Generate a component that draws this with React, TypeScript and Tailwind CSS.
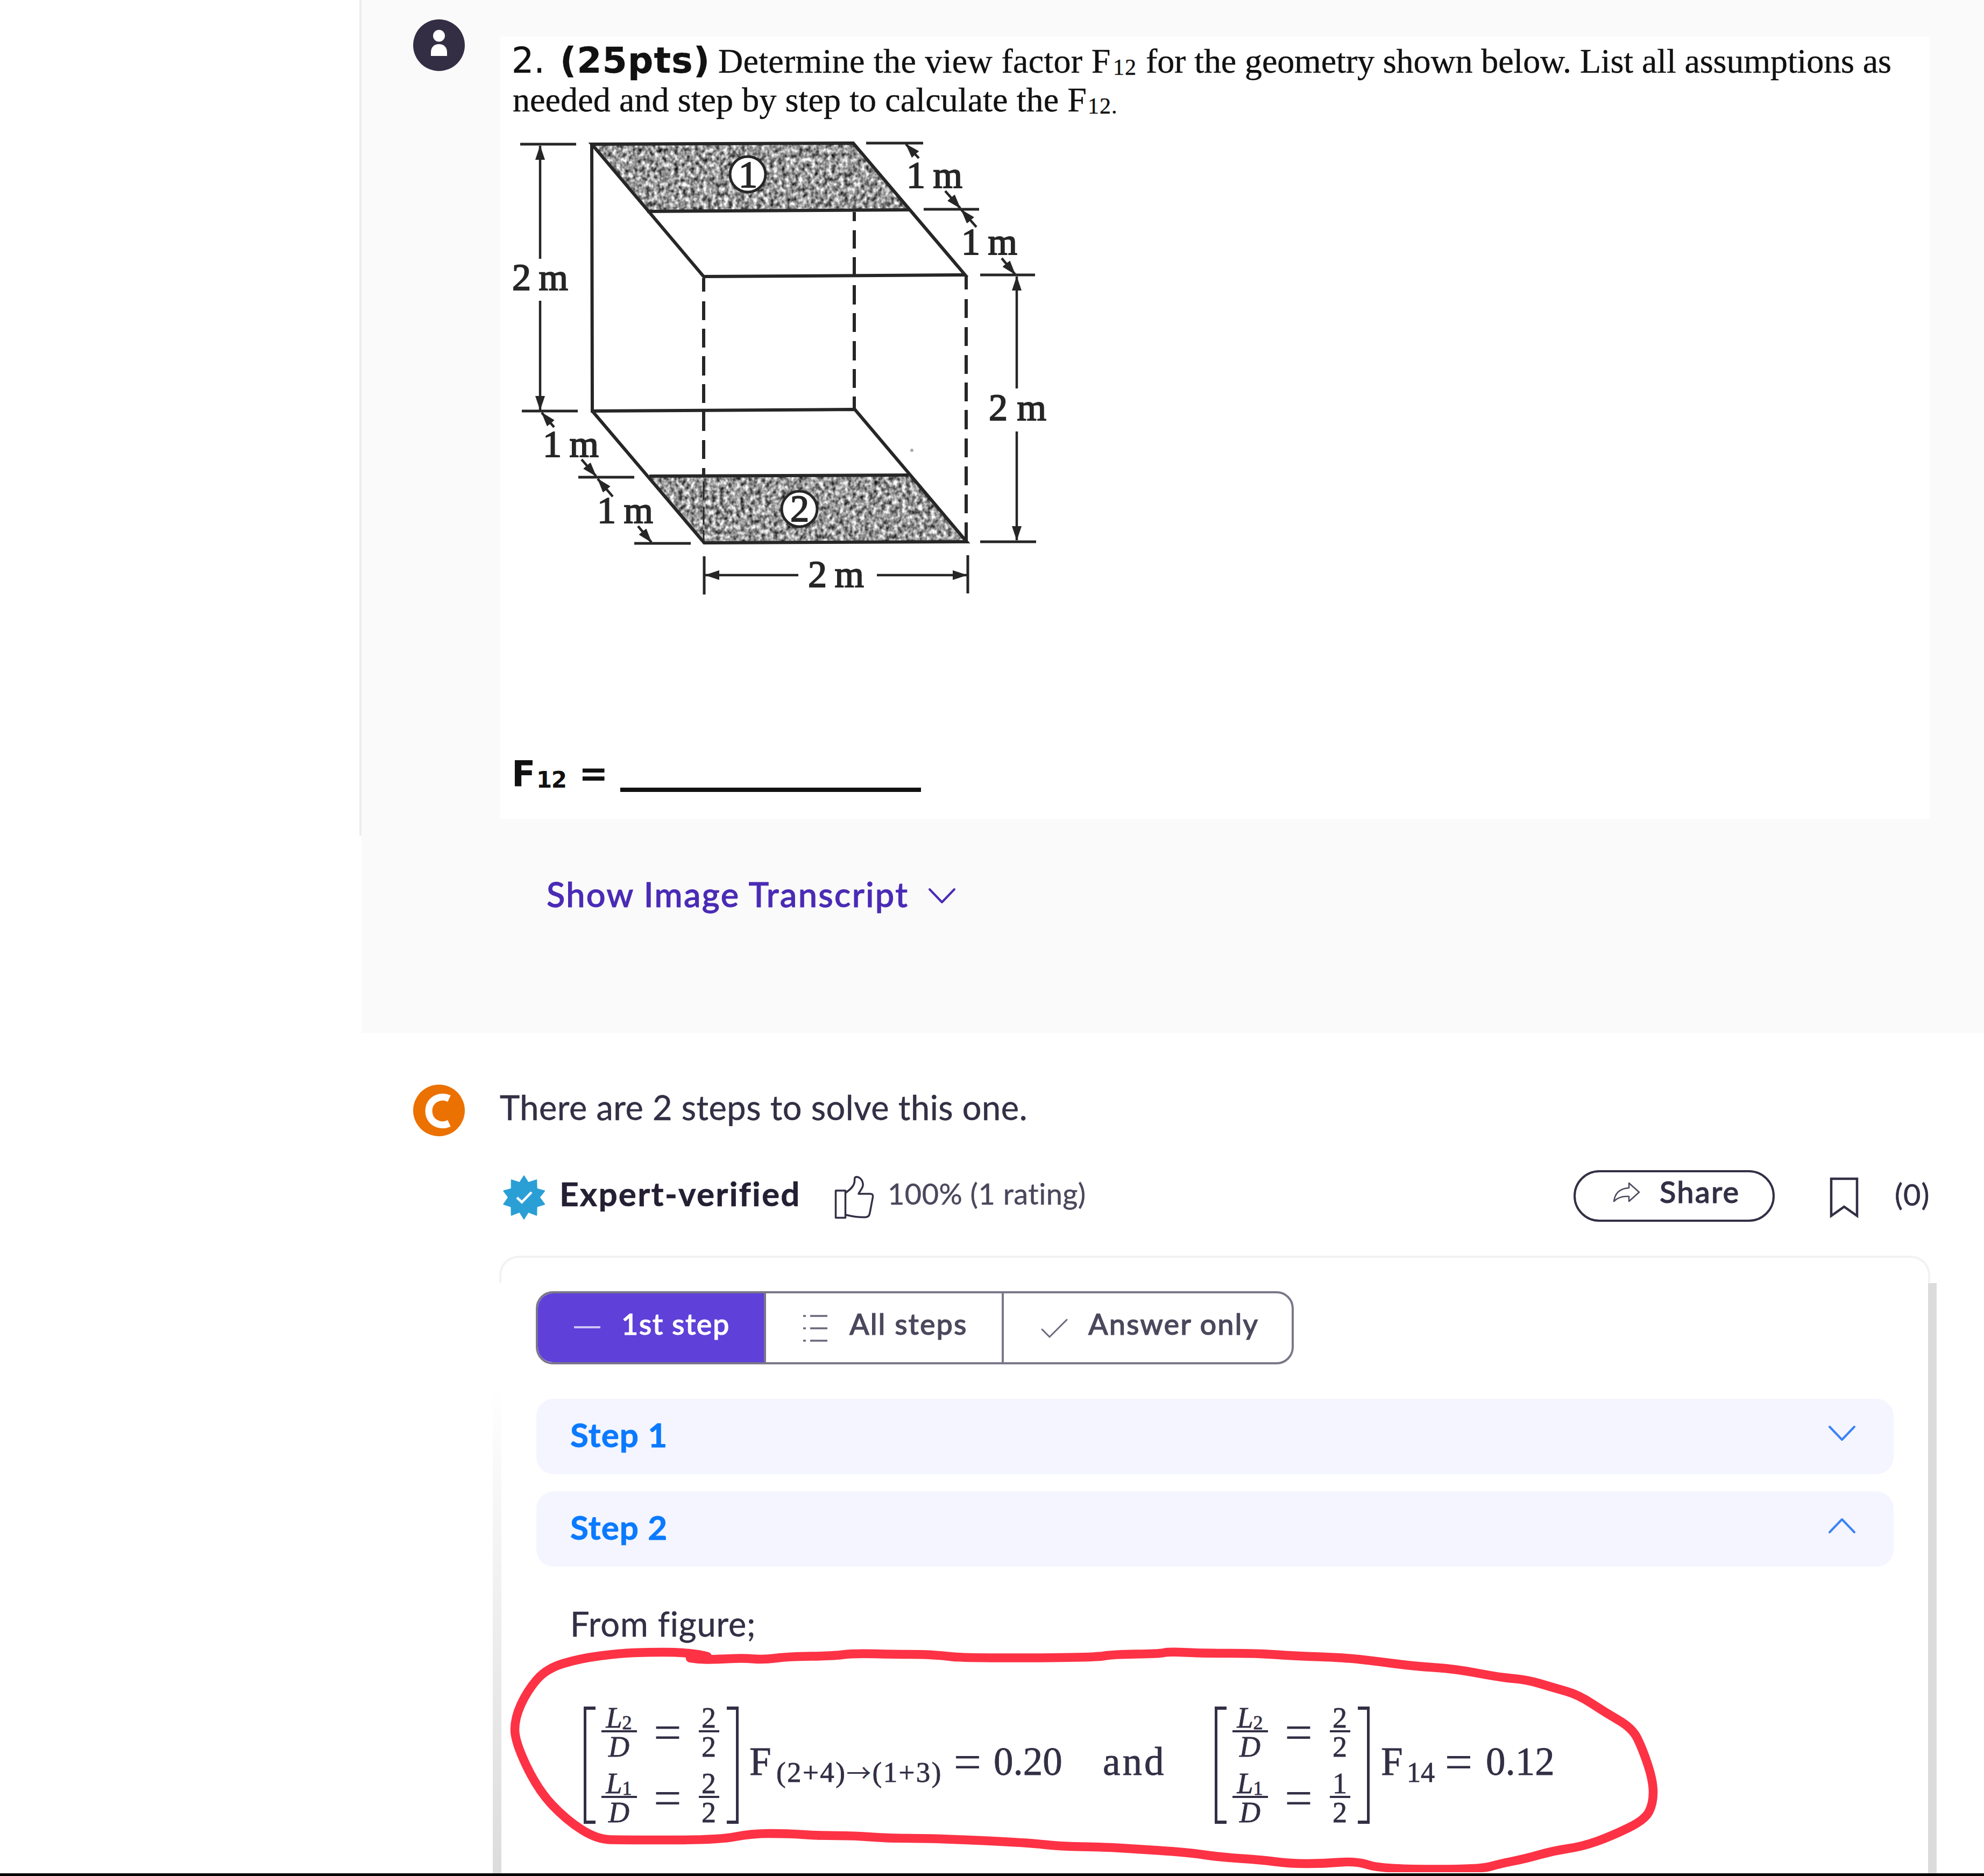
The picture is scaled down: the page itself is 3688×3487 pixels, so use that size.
import type { ReactNode } from "react"

const serif = "font-['Liberation_Serif',serif]"
const verdana = "font-['DejaVu_Sans',sans-serif]"

function Avatar() {
  return (
    <svg viewBox="0 0 96 96" className="w-24 h-24 shrink-0">
      <circle cx="48" cy="48" r="48" fill="#332e44" />
      <circle cx="48" cy="30.500" r="11" fill="#fff" />
      <path d="M33 68v-7c0-9 6-15 15-15s15 6 15 15v7z" fill="#fff" />
    </svg>
  )
}

function BrandMark() {
  return (
    <svg viewBox="0 0 96 96" className="w-24 h-24 shrink-0">
      <circle cx="48" cy="48" r="48" fill="#eb7100" />
      <path d="M67 26C50 18 29 28 29 49C29 70 50 80 67 72" fill="none" stroke="#fff" strokeWidth="13" />
    </svg>
  )
}

function VerifiedBadge() {
  return (
    <svg viewBox="0 0 110 110" className="w-[110px] h-[110px] shrink-0">
      <path
        d="M54 14.500L62 27L77.500 22L78 38.500L92.500 42.500L83 54.500L92.500 67.500L78 72L77.500 88L62 82L54 95L46 82L30.500 88L30 72L16 67.500L25 54.500L16 42.500L30.500 38.500L30.500 22L46 27Z"
        fill="#2a9fd6"
        stroke="#2a9fd6"
        strokeWidth="1.500"
        strokeLinejoin="round"
      />
      <path d="M41 55l9 8.500L68 45" fill="none" stroke="#fff" strokeWidth="4.500" />
    </svg>
  )
}

function ThumbIcon() {
  return (
    <svg viewBox="0 0 110 110" className="w-[110px] h-[110px] shrink-0" fill="none" stroke="#332f45" strokeWidth="3.500" strokeLinejoin="round">
      <path d="M13.500 42H31.500V92.500H13.500Z" />
      <path d="M32 46C42 39 48 33 48.500 25C48.500 19 48.500 16.500 52.500 16.500C59 17 65 24 64 33C63 39 59 41 56 48H77C82 48 83 50 82.500 54L77 83C76 89 74 91 69 91.500C56 92 44 90 32 87" />
    </svg>
  )
}

function Chevron({ up = false, color }: { up?: boolean; color: string }) {
  return (
    <svg viewBox="0 0 52 30" className="w-[52px] h-[30px] shrink-0" fill="none" stroke={color} strokeWidth="4" strokeLinecap="round" strokeLinejoin="round">
      <path d={up ? "M3 27L26 3L49 27" : "M3 3L26 27L49 3"} />
    </svg>
  )
}

function Arrow({ x1, y1, x2, y2 }: { x1: number; y1: number; x2: number; y2: number }) {
  return <line x1={x1} y1={y1} x2={x2} y2={y2} strokeWidth="4.500" markerEnd="url(#head)" />
}

function BoxFigure() {
  return (
    <svg viewBox="29 0 1071 900" className="w-[1071px] h-[900px] block" fill="none" stroke="#262626" strokeWidth="6">
      <defs>
        <marker id="head" markerUnits="userSpaceOnUse" markerWidth="28" markerHeight="20" refX="26" refY="9" orient="auto">
          <path d="M0 0L27 9L0 18Z" fill="#262626" stroke="none" />
        </marker>
        <filter id="grain" x="0" y="0" width="1" height="1" colorInterpolationFilters="sRGB">
          <feTurbulence type="fractalNoise" baseFrequency="0.13 0.11" numOctaves="2" seed="4" />
          <feColorMatrix values="1.500 0 0 0 -0.150  1.500 0 0 0 -0.150  1.500 0 0 0 -0.150  0 0 0 0 1" />
          <feComposite in2="SourceGraphic" operator="in" />
        </filter>
      </defs>

      <polygon points="200,38 686,36 791,160 303,163" fill="#999" stroke="none" filter="url(#grain)" />
      <polygon points="307,655 789,653 897,777 409,779" fill="#999" stroke="none" filter="url(#grain)" />

      {/* solid edges */}
      <path d="M200 38L686 36L894 281L408 284Z" />
      <path d="M303 163L791 160" />
      <path d="M200 38L201 534L689 531L897 777L409 779L201 534" />
      <path d="M307 655L789 653" />

      {/* hidden edges */}
      <path d="M688 164V181M688 198V232M688 248V284M688 300V336M688 352V387M688 404V440M688 456V491M688 507V531" />
      <path d="M408 287V312M408 330V365M408 381V416M408 432V468M408 484V519M408 535V571M408 588V623M408 640V655" />
      <path d="M408 665V700M408 712V745M408 755V779" strokeWidth="3" />
      <path d="M896 284V308M896 326V361M896 378V413M896 430V465M896 481V516M896 532V568M896 585V620M896 637V672M896 689V724M896 741V777" />

      {/* dimension ticks */}
      <g strokeWidth="5">
        <path d="M67 38H171M70 534H174M175 657H279M279 780H384" />
        <path d="M710 36H816M817 159H920M922 281H1024M922 777H1026" />
        <path d="M409 804V875M899 802V873" />
      </g>
      <Arrow x1={104} y1={251} x2={104} y2={41} />
      <Arrow x1={104} y1={329} x2={104} y2={532} />
      <Arrow x1={990} y1={492} x2={990} y2={284} />
      <Arrow x1={990} y1={572} x2={990} y2={774} />
      <Arrow x1={584} y1={839} x2={411} y2={839} />
      <Arrow x1={730} y1={839} x2={897} y2={839} />
      <Arrow x1={808} y1={64} x2={784} y2={38} />
      <Arrow x1={857} y1={125} x2={885} y2={157} />
      <Arrow x1={915} y1={192} x2={887} y2={160} />
      <Arrow x1={962} y1={250} x2={987} y2={280} />
      <Arrow x1={130} y1={564} x2={107} y2={537} />
      <Arrow x1={181} y1={624} x2={208} y2={655} />
      <Arrow x1={239} y1={693} x2={211} y2={660} />
      <Arrow x1={286} y1={748} x2={311} y2={778} />
      <circle cx="795" cy="607" r="3" fill="#aaa" stroke="none" />

      <circle cx="490" cy="94" r="33" fill="#fff" strokeWidth="5" />
      <circle cx="586" cy="716" r="33" fill="#fff" strokeWidth="5" />
      <g className={serif} fill="#262626" stroke="#262626" strokeWidth="2" fontSize="70">
        <text x="473" y="118">1</text>
        <text x="569" y="739">2</text>
        <text x="52" y="309" textLength="104">2 m</text>
        <text x="785" y="119" textLength="104">1 m</text>
        <text x="887" y="243" textLength="104">1 m</text>
        <text x="109" y="619" textLength="104">1 m</text>
        <text x="210" y="742" textLength="104">1 m</text>
        <text x="938" y="551" textLength="107">2 m</text>
        <text x="602" y="861" textLength="104">2 m</text>
      </g>
    </svg>
  )
}

function Question() {
  return (
    <section className="flex h-[1920px] pl-[668px]">
      <div className="w-1 h-[1553px] bg-[#ededed]" />
      <div className="flex flex-1 gap-[65px] bg-[#fafafa] pl-24 pt-9">
        <Avatar />
        <div className="flex flex-col">
          <div className="mt-8 w-[2659px] h-[1454px] bg-white text-[#111]">
            <div className={`h-[162px] pl-6 pt-2 text-[64px] leading-[74px] whitespace-pre [-webkit-text-stroke:0.4px] ${serif}`}>
              <div className="flex items-baseline h-[73px]">
                <span className={`w-[90px] -ml-0.5 text-[65px] ${verdana}`}>2.</span>
                <span className={`w-[294px] text-[66px] font-bold tracking-[1.3px] ${verdana}`}>(25pts)</span>
                <span className="w-[734px] tracking-[0.3px]">Determine the view factor F</span>
                <span className="relative top-1 w-[61px] text-[42px] leading-none tracking-[1px]">12</span>
                <span className="tracking-[-0.1px]">for the geometry shown below. List all assumptions as</span>
              </div>
              <div className="flex items-baseline">
                <span className="w-[1069px] tracking-[0.1px]">needed and step by step to calculate the F</span>
                <span className="relative top-1 text-[42px] leading-none tracking-[1px]">12.</span>
              </div>
            </div>
            <BoxFigure />
            <div className={`flex items-baseline mt-[272px] pl-[22px] text-[65px] font-bold leading-[74px] ${verdana}`}>
              <span className="w-[46px]">F</span>
              <span className="relative top-[3px] w-[79px] text-[42px] tracking-[-1.5px]">12</span>
              <span className="w-[77px]">=</span>
              <span className="h-2 w-[559px] translate-y-[11px] bg-[#111]" />
            </div>
          </div>
          <button className="flex items-center mt-[100px] pl-[87px] text-[63px] font-medium leading-[80px] text-[#4a2bb5]">
            <span className="w-[709px] text-left whitespace-nowrap tracking-[2.4px] [-webkit-text-stroke:1.1px]">Show Image Transcript</span>
            <span className="pt-1.5">
              <Chevron color="#4a2bb5" />
            </span>
          </button>
        </div>
      </div>
    </section>
  )
}

function StatusRow() {
  return (
    <div className="flex items-start mt-[77px] h-24 w-[2659px] whitespace-nowrap">
      <div className="-mt-1 -ml-[9px] w-[120px]">
        <VerifiedBadge />
      </div>
      <span className="w-[500px] text-[62px] font-bold leading-[86px] tracking-[2.2px] text-[#241f33] [-webkit-text-stroke:0.6px]">Expert-verified</span>
      <div className="-mt-1 w-[110px]">
        <ThumbIcon />
      </div>
      <span className="text-[54px] leading-[88px] tracking-[0.5px] text-[#4b475c] [-webkit-text-stroke:0.4px]">100% (1 rating)</span>
      <button className="flex items-start ml-auto w-[374px] h-24 rounded-full border-4 border-[#332f45] pl-[68px] text-[56px] font-medium leading-[72px] tracking-[2.2px] text-[#332f45] [-webkit-text-stroke:1.1px]">
        <svg viewBox="0 0 54 42" className="w-[54px] h-[42px] mt-[17px] mr-[34px]" fill="none" stroke="#4b475c" strokeWidth="2.500" strokeLinejoin="round">
          <path d="M3 37C5 21 15 13 31 12V3L50 20L31 37V28C18 27 10 30 3 37Z" />
        </svg>
        Share
      </button>
      <svg viewBox="0 0 56 78" className="w-14 h-[78px] mt-3 ml-[101px]" fill="none" stroke="#332f45" strokeWidth="4.500">
        <path d="M4 4H52V73L28 56L4 73Z" />
      </svg>
      <span className="ml-[66px] w-[66px] text-[56px] leading-[89px] tracking-[1px] text-[#332f45] [-webkit-text-stroke:0.6px]">(0)</span>
    </div>
  )
}

function Tabs() {
  return (
    <div className="flex w-[1409px] h-[136px] -ml-px overflow-hidden rounded-[32px] border-4 border-[#7b778a] text-[54px] font-medium leading-[113px] tracking-[2px] text-[#4b475c] whitespace-nowrap [-webkit-text-stroke:1.1px]">
      <button className="flex w-[424px] border-r-4 border-[#7b778a] bg-[#5f40d9] pl-[67px] text-white tracking-[1.5px]">
        <span className="mt-[61px] mr-[39px] h-1 w-[49px] bg-[#cdc3f4]" />
        1st step
      </button>
      <button className="flex w-[442px] border-r-4 border-[#7b778a] pl-[67px]">
        <svg viewBox="0 0 50 54" className="w-[50px] h-[54px] mt-[38px] mr-[38px]" stroke="#6b677b" strokeWidth="3.500">
          <path d="M2 4H7M15 4H47M2 27H7M15 27H47M2 50H7M15 50H47" />
        </svg>
        All steps
      </button>
      <button className="flex pl-[68px]">
        <svg viewBox="0 0 52 40" className="w-[52px] h-10 mt-[45px] mr-[37px]" fill="none" stroke="#6b677b" strokeWidth="3" strokeLinecap="round">
          <path d="M3 22L17 36L49 4" />
        </svg>
        Answer only
      </button>
    </div>
  )
}

function StepBar({ title, open = false }: { title: string; open?: boolean }) {
  return (
    <button className="flex justify-between w-[2523px] h-[140px] rounded-[32px] bg-[#f4f5ff] pl-[63px] pr-[70px] text-[62px] font-bold leading-[132px] tracking-[1.1px] text-[#0a7aff] [-webkit-text-stroke:0.8px]">
      {title}
      <span className="mt-[49px]">
        <Chevron up={open} color="#3b82f6" />
      </span>
    </button>
  )
}

function Fraction({ top, sub, bottom, wide = false }: { top: string; sub?: string; bottom: string; wide?: boolean }) {
  return (
    <div className={`flex flex-col items-center text-[54px] ${wide ? "w-[66px] italic" : "w-[38px]"}`}>
      <div className="h-[59px] leading-[73px] whitespace-nowrap">
        {top}
        {sub && <span className="relative top-[3px] text-[36px] not-italic leading-none">{sub}</span>}
      </div>
      <div className="h-1 w-full bg-[#332f45]" />
      <div className="h-[59px] leading-[55px]">{bottom}</div>
    </div>
  )
}

function Equals({ children = "=" }: { children?: ReactNode }) {
  return <span className="flex w-[49px] justify-center text-[92px] [-webkit-text-stroke:0px]">{children}</span>
}

function Matrix({ rows }: { rows: string[][] }) {
  return (
    <div className="flex h-[218px] w-[288px] justify-between">
      <div className="w-[22px] border-y-[6px] border-l-[5px] border-[#332f45]" />
      <div className="-mt-[15px] w-[219px]">
        {rows.map(([sub, num, den]) => (
          <div key={sub} className="flex items-center justify-between h-[122px]">
            <Fraction top="L" sub={sub} bottom="D" wide />
            <div className="pt-1 leading-[92px]">
              <Equals />
            </div>
            <Fraction top={num} bottom={den} />
          </div>
        ))}
      </div>
      <div className="w-[22px] ml-1 border-y-[6px] border-r-[5px] border-[#332f45]" />
    </div>
  )
}

function Equation() {
  return (
    <div className={`flex items-start mt-[115px] ml-[88px] h-[218px] text-[73px] leading-[205px] text-[#332f45] whitespace-nowrap [-webkit-text-stroke:0.8px] ${serif}`}>
      <Matrix rows={[["2", "2", "2"], ["1", "2", "2"]]} />
      <span className="ml-5 w-[50px]">F</span>
      <span className="w-[331px] text-[53px] leading-[245px] tracking-[2.4px]">
        (2+4)<span className="font-['Noto_Sans_CJK_JP','DejaVu_Sans',sans-serif] text-[46px] leading-none [-webkit-text-stroke:0px]">→</span>(1+3)
      </span>
      <div className="leading-[206px]">
        <Equals />
      </div>
      <span className="ml-[24px] w-[203px]">0.20</span>
      <span className="w-[208px] tracking-[4px]">and</span>
      <Matrix rows={[["2", "2", "2"], ["1", "1", "2"]]} />
      <span className="ml-[21px] w-[48px]">F</span>
      <span className="w-[72px] text-[52px] leading-[245px]">14</span>
      <div className="leading-[206px]">
        <Equals />
      </div>
      <span className="ml-[26px]">0.12</span>
    </div>
  )
}

const markerPoints =
  "1283,3082 1300,3085 1336,3084 1382,3082 1420,3085 1466,3079 1550,3078 1585,3073 1665,3075 1711,3075 1750,3077 1792,3082 2033,3081 2070,3075 2154,3074 2173,3070 2238,3073 2337,3073 2406,3078 2498,3081 2560,3088 2628,3097 2705,3102 2789,3118 2838,3122 2888,3137 2934,3150 2984,3183 3034,3212 3053,3250 3073,3310 3073,3353 3057,3383 2995,3413 2942,3432 2888,3440 2835,3455 2789,3464 2750,3475 2567,3474 2521,3459 2460,3464 2398,3464 2345,3457 2268,3452 2207,3443 2100,3436 2048,3433 1971,3432 1910,3425 1734,3417 1650,3417 1589,3412 1520,3412 1466,3408 1397,3408 1336,3420 1160,3420 1110,3419 1053,3383 1000,3327 957,3237 957,3193 980,3143 1015,3102 1076,3083 1152,3073 1206,3071 1260,3071 1300,3075 1330,3083"

// Smooths the hand-drawn loop by running quadratic curves through the midpoints.
function smooth(points: string) {
  const pts = points.split(" ").map((p) => p.split(",").map(Number))
  let d = `M${pts[0][0]} ${pts[0][1]}`
  for (let i = 1; i < pts.length - 1; i++) {
    const mx = (pts[i][0] + pts[i + 1][0]) / 2
    const my = (pts[i][1] + pts[i + 1][1]) / 2
    d += `Q${pts[i][0]} ${pts[i][1]} ${mx} ${my}`
  }
  return d
}

function MarkerLoop() {
  return (
    <svg viewBox="0 0 3688 3480" className="absolute left-0 top-0 w-[3688px] h-[3480px] pointer-events-none">
      <path d={smooth(markerPoints)} fill="none" stroke="#fd3245" strokeWidth="16.500" strokeLinecap="round" strokeLinejoin="round" />
    </svg>
  )
}

function Answer() {
  return (
    <section className="flex gap-[65px] pl-[768px] pt-24 h-[1562px] overflow-hidden">
      <BrandMark />
      <div className="flex flex-col">
        <p className="mt-0.5 text-[63px] leading-[80px] tracking-[0.55px] text-[#332f45] [-webkit-text-stroke:0.5px]">There are 2 steps to solve this one.</p>
        <StatusRow />
        <div className="flex -ml-[13px] mt-[63px] h-[1149px] w-[2684px]">
          <div className="w-4 mt-[240px] bg-linear-to-b from-white to-[#dcdcdc]" />
          <div className="relative flex-1 pl-[65px] pt-[66px]">
            <div className="absolute -left-1 -right-1 top-0 h-[50px] rounded-t-[36px] border-4 border-b-0 border-[#f2f2f2]" />
            <Tabs />
            <div className="flex flex-col gap-8 mt-16">
              <StepBar title="Step 1" />
              <StepBar title="Step 2" open />
            </div>
            <p className="mt-[66px] ml-[63px] h-[79px] text-[63px] leading-[80px] tracking-[0.9px] text-[#332f45] [-webkit-text-stroke:0.5px]">From figure;</p>
            <Equation />
          </div>
          <div className="w-4 mt-[51px] bg-[#dcdcdc]" />
        </div>
      </div>
    </section>
  )
}

export default function App() {
  return (
    <main className="relative w-[3688px] h-[3487px] overflow-hidden bg-white font-['Lato',sans-serif]">
      <Question />
      <Answer />
      <div className="h-[5px] bg-black" />
      <MarkerLoop />
    </main>
  )
}
